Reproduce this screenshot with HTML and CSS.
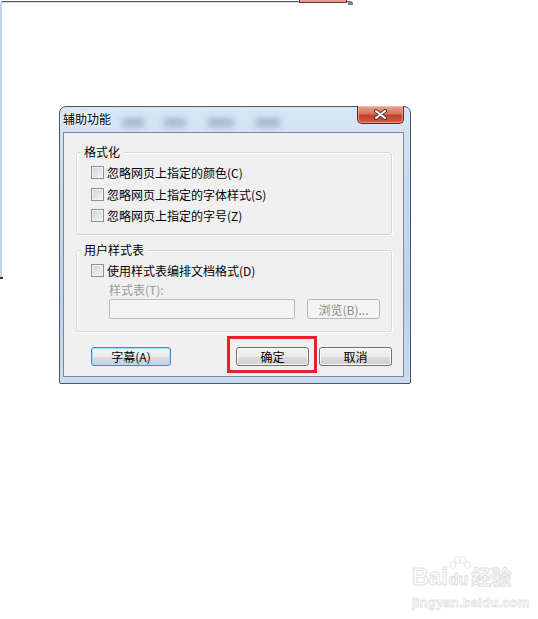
FILE: index.html
```html
<!DOCTYPE html>
<html lang="zh-CN">
<head>
    <meta charset="UTF-8">
    <meta name="viewport" content="width=device-width, initial-scale=1.0">
    <title>辅助功能</title>
    <link rel="stylesheet" href="styles.css">
</head>
<body>
    <div class="desktop">
        <!-- окно на заднем плане -->
        <div class="bg-window">
            <span class="bg-close"></span>
            <span class="bg-corner"></span>
            <span class="bg-foot"></span>
        </div>

        <!-- диалог -->
        <div class="dialog">
            <div class="titlebar">
                <span class="title">辅助功能</span>
                <span class="blur b1"></span>
                <span class="blur b2"></span>
                <span class="blur b3"></span>
                <span class="blur b4"></span>
                <span class="close-btn">
                    <svg width="15" height="11" viewBox="0 0 15 11">
                        <path d="M3 2 L12 9 M12 2 L3 9" stroke="#4a3a3a" stroke-width="4" stroke-linecap="round"/>
                        <path d="M3 2 L12 9 M12 2 L3 9" stroke="#ffffff" stroke-width="2" stroke-linecap="round"/>
                    </svg>
                </span>
            </div>

            <div class="client">
                <div class="group group-format">
                    <span class="legend">格式化</span>
                    <label class="check-row"><span class="check"></span>忽略网页上指定的颜色(C)</label>
                    <label class="check-row"><span class="check"></span>忽略网页上指定的字体样式(S)</label>
                    <label class="check-row"><span class="check"></span>忽略网页上指定的字号(Z)</label>
                </div>

                <div class="group group-style">
                    <span class="legend">用户样式表</span>
                    <label class="check-row"><span class="check"></span>使用样式表编排文档格式(D)</label>
                    <div class="field-label">样式表(T):</div>
                    <div class="field-row">
                        <span class="text-input"></span>
                        <span class="btn btn-disabled">浏览(B)...</span>
                    </div>
                </div>

                <div class="button-row">
                    <span class="btn btn-default btn-captions">字幕(A)</span>
                    <span class="btn btn-ok">确定</span>
                    <span class="btn btn-cancel">取消</span>
                </div>

                <!-- красная рамка-пометка -->
                <span class="highlight"></span>
            </div>
        </div>

        <!-- водяной знак -->
        <div class="watermark">
            <svg class="wm-paw" width="24" height="22" viewBox="0 0 24 22">
                <ellipse cx="5" cy="9" rx="3" ry="3.5" fill="#fff" stroke="#e4e4e4"/>
                <ellipse cx="9.5" cy="4" rx="3" ry="3.5" fill="#fff" stroke="#e4e4e4"/>
                <ellipse cx="15" cy="4" rx="3" ry="3.5" fill="#fff" stroke="#e4e4e4"/>
                <ellipse cx="19.5" cy="9" rx="3" ry="3.5" fill="#fff" stroke="#e4e4e4"/>
            </svg>
            <div class="wm-logo">Bai<span class="wm-du">du</span><span class="wm-cn">经验</span></div>
            <div class="wm-url">jingyan.baidu.com</div>
        </div>
    </div>
</body>
</html>
```

FILE: styles.css
```css
/* Основные стили */
body {
    margin: 0;
    background: #fff;
    font-family: "Noto Sans CJK SC", "Liberation Sans", sans-serif;
    font-size: 12px;
    color: #000;
}

.desktop {
    position: relative;
    width: 538px;
    height: 619px;
    overflow: hidden;
}

/* Окно на заднем плане */
.bg-window {
    position: absolute;
    left: 0;
    top: 1px;
    width: 348px;
    height: 275px;
    border-top: 1px solid #4d5865;
    border-left: 2px solid #bcd3ec;
    border-top-left-radius: 3px;
    box-shadow: inset 0 1px 0 #cfe0f2;
}

.bg-close {
    position: absolute;
    left: 297px;
    top: -2px;
    width: 46px;
    height: 2px;
    background: #e49a90;
    border: 1px solid #6b3a36;
    border-top: none;
}

.bg-corner {
    position: absolute;
    left: 346px;
    top: -1px;
    width: 5px;
    height: 4px;
    background: #7b7f84;
    border-top-right-radius: 3px;
}

.bg-foot {
    position: absolute;
    left: -2px;
    bottom: -2px;
    width: 3px;
    height: 2px;
    background: #333;
}

/* Диалог */
.dialog {
    position: absolute;
    left: 59px;
    top: 106px;
    width: 352px;
    height: 278px;
    box-sizing: border-box;
    border: 1px solid #4a5866;
    border-radius: 7px 7px 2px 2px;
    background: linear-gradient(to bottom, #d8e7f6 0%, #c6d9ee 30%, #bcd2ea 70%, #c9dcf0 100%);
    display: flex;
    flex-direction: column;
}

.titlebar {
    position: relative;
    height: 25px;
    padding: 3px 0 0 3px;
    box-sizing: border-box;
}

.title {
    position: relative;
    z-index: 1;
    line-height: 16px;
    text-shadow: 0 0 6px #fff, 0 0 3px #fff;
}

.blur {
    position: absolute;
    top: 11px;
    height: 9px;
    background: rgba(70, 90, 120, 0.32);
    filter: blur(3px);
}

.b1 { left: 62px; width: 22px; }
.b2 { left: 104px; width: 22px; }
.b3 { left: 148px; width: 26px; }
.b4 { left: 196px; width: 24px; }

.close-btn {
    position: absolute;
    right: 6px;
    top: -1px;
    width: 47px;
    height: 18px;
    box-sizing: border-box;
    border: 1px solid #5b2a24;
    border-top: none;
    border-radius: 0 0 5px 5px;
    background: linear-gradient(to bottom, #e9a597 0%, #d8725d 45%, #c4412c 55%, #cf5a40 100%);
    box-shadow: inset 0 0 0 1px rgba(255, 210, 200, 0.5);
    display: flex;
    justify-content: center;
    align-items: center;
}

.client {
    position: relative;
    height: 245px;
    margin: 0 6px 6px 3px;
    padding: 19px 0 0 12px;
    box-sizing: border-box;
    border: 1px solid #7b8896;
    background: #f0f0f0;
}

/* Групбоксы */
.group {
    position: relative;
    width: 316px;
    box-sizing: border-box;
    border: 1px solid #d5dadf;
    border-radius: 3px;
    box-shadow: inset 1px 1px 0 #fff, 1px 1px 0 #fff;
    padding-left: 14px;
}

.group-format {
    height: 83px;
    padding-top: 9px;
}

.group-style {
    height: 82px;
    margin-top: 15px;
    padding-top: 8px;
}

.legend {
    position: absolute;
    left: 4px;
    top: -9px;
    padding: 0 3px;
    line-height: 16px;
    background: #f0f0f0;
}

.check-row {
    display: flex;
    align-items: center;
    height: 21.5px;
    white-space: nowrap;
}

.group-style .check-row {
    height: 22px;
}

.check {
    width: 13px;
    height: 13px;
    box-sizing: border-box;
    margin-right: 3px;
    border: 1px solid #8e8f8f;
    background: linear-gradient(135deg, #cdd1d6 0%, #e6e8ea 60%, #f6f6f6 100%);
    box-shadow: inset 0 0 0 1px #f4f4f4;
}

.field-label {
    margin: 1px 0 0 18px;
    line-height: 16px;
    color: #9a9a9a;
}

.field-row {
    display: flex;
    margin: 1px 0 0 18px;
}

.text-input {
    width: 186px;
    height: 20px;
    box-sizing: border-box;
    border: 1px solid #bcbcbc;
    border-radius: 2px;
    background: #f3f3f3;
}

/* Кнопки */
.btn {
    display: flex;
    justify-content: center;
    align-items: center;
    width: 73px;
    height: 19px;
    box-sizing: border-box;
    border: 1px solid #707070;
    border-radius: 3px;
    background: linear-gradient(to bottom, #f2f2f2 0%, #ebebeb 50%, #dddddd 51%, #cfcfcf 100%);
    box-shadow: inset 0 0 0 1px #fbfbfb;
    white-space: nowrap;
}

.btn-disabled {
    margin-left: 12px;
    height: 20px;
    border-color: #b3b7ba;
    background: #f4f4f4;
    box-shadow: none;
    color: #8a8a8a;
}

.button-row {
    display: flex;
    margin-top: 15px;
}

.btn-captions {
    width: 80px;
    margin-left: 15px;
}

.btn-default {
    border-color: #3c8fcc;
    box-shadow: inset 0 0 0 1px #a9dcf6;
}

.btn-ok {
    margin-left: 65px;
}

.btn-cancel {
    margin-left: 10px;
}

.highlight {
    position: absolute;
    left: 163px;
    top: 203px;
    width: 90px;
    height: 37px;
    box-sizing: border-box;
    border: 3px solid #e5232b;
}

/* Водяной знак */
.watermark {
    position: absolute;
    left: 412px;
    top: 556px;
    width: 110px;
}

.wm-paw {
    position: absolute;
    left: 36px;
    top: 0;
}

.wm-logo {
    margin-top: 9px;
    font-family: "Liberation Sans", sans-serif;
    font-weight: bold;
    font-size: 23px;
    line-height: 24px;
    color: #fff;
    -webkit-text-stroke: 1px #e0e0e0;
    white-space: nowrap;
}

.wm-du {
    font-size: 16px;
    margin-left: 1px;
}

.wm-cn {
    font-family: "Noto Sans CJK SC", sans-serif;
    font-size: 20px;
    margin-left: 3px;
}

.wm-url {
    margin-top: 3px;
    font-family: "Liberation Sans", sans-serif;
    font-size: 13px;
    font-weight: bold;
    color: #fff;
    -webkit-text-stroke: 0.8px #e2e2e2;
    letter-spacing: 0.2px;
}
```
